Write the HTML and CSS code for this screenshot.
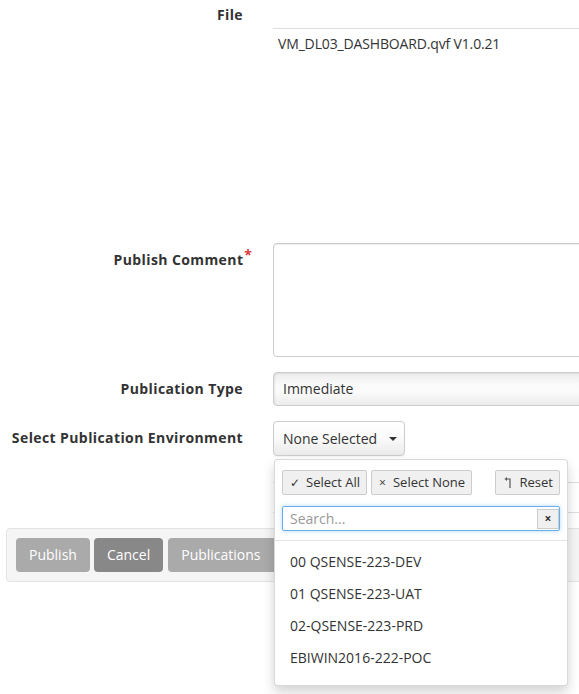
FILE: index.html
```html
<!DOCTYPE html>
<html>
<head>
<meta charset="utf-8">
<link rel="stylesheet" href="styles.css">
</head>
<body>
<div class="page">
  <div class="row row-file">
    <div class="label">File</div>
    <div class="field">
      <div class="file-head"></div>
      <div class="file-value">VM_DL03_DASHBOARD.qvf V1.0.21</div>
    </div>
  </div>

  <div class="row row-comment">
    <div class="label">Publish Comment<span class="req">*</span></div>
    <div class="field">
      <div class="textarea"></div>
    </div>
  </div>

  <div class="row row-type">
    <div class="label">Publication Type</div>
    <div class="field">
      <div class="select">Immediate</div>
    </div>
  </div>

  <div class="row row-env">
    <div class="label">Select Publication Environment</div>
    <div class="field">
      <div class="ms-wrap">
        <div class="ms-btn">None Selected <span class="caret"></span></div>
        <div class="ms-menu">
          <div class="ms-actions">
            <div class="ms-small"><span class="ico">&#10003;</span>Select All</div>
            <div class="ms-small"><span class="ico x">&#215;</span>Select None</div>
            <div class="ms-small reset"><svg class="reset-ico" width="8" height="11" viewBox="0 0 8 11"><path d="M6 11V2H2.5" fill="none" stroke="#555" stroke-width="1.2"/><path d="M0.5 2L3 0V4Z" fill="#555"/></svg>Reset</div>
          </div>
          <div class="ms-search">
            <div class="search-input">Search...</div>
            <div class="search-clear">&#215;</div>
          </div>
          <div class="ms-divider"></div>
          <ul class="ms-list">
            <li>00 QSENSE-223-DEV</li>
            <li>01 QSENSE-223-UAT</li>
            <li>02-QSENSE-223-PRD</li>
            <li>EBIWIN2016-222-POC</li>
          </ul>
        </div>
      </div>
      <div class="behind">
        <div class="behind-row"></div>
        <div class="behind-row"></div>
      </div>
    </div>
  </div>

  <div class="footer">
    <div class="btn btn-light">Publish</div>
    <div class="btn btn-dark">Cancel</div>
    <div class="btn btn-light">Publications</div>
  </div>
</div>
</body>
</html>
```

FILE: styles.css
```css
html, body {
  margin: 0;
  padding: 0;
  background: #fff;
  overflow: hidden;
}
body {
  font-family: "Open Sans", "DejaVu Sans", sans-serif;
  font-size: 14px;
  color: #333;
  width: 579px;
  height: 694px;
}
.page {
  width: 760px;
}
.row {
  display: grid;
  grid-template-columns: 243px 420px;
  column-gap: 30px;
}
.label {
  text-align: right;
  font-weight: 700;
  line-height: 20px;
  padding-top: 7px;
  white-space: nowrap;
  letter-spacing: 0.4px;
}
.req {
  color: #e03a3a;
  position: relative;
  top: -5px;
  font-size: 14px;
  margin-left: 1px;
  margin-right: -9px;
  letter-spacing: 0;
}
.row-file .label {
  padding-top: 5px;
}
.row-file {
  height: 243px;
}
.file-head {
  height: 28px;
  border-bottom: 1px solid #ddd;
}
.file-value {
  padding: 5px 0 0 5px;
  line-height: 20px;
  letter-spacing: -0.15px;
}
.textarea {
  height: 112px;
  border: 1px solid #ccc;
  border-radius: 4px;
  box-shadow: inset 0 1px 1px rgba(0,0,0,.075);
  background: #fff;
}
.row-comment {
  margin-bottom: 15px;
}
.select {
  height: 32px;
  line-height: 32px;
  border: 1px solid #ccc;
  border-radius: 4px;
  padding-left: 9px;
  background: linear-gradient(#ededed, #fbfbfb 40%, #fbfbfb 60%, #ececec);
  box-shadow: inset 1px 1px 2px rgba(0,0,0,.08);
}
.row-type {
  margin-bottom: 15px;
}
.field {
  position: relative;
}
.ms-wrap {
  position: relative;
  width: 132px;
  z-index: 2;
}
.ms-btn {
  box-sizing: border-box;
  height: 35px;
  line-height: 33px;
  width: 132px;
  border: 1px solid #ccc;
  border-radius: 4px;
  padding-left: 9px;
  background: linear-gradient(#fff, #fafafa 50%, #eaeaea);
  box-shadow: 0 1px 1px rgba(0,0,0,.05);
  white-space: nowrap;
}
.caret {
  display: inline-block;
  width: 0;
  height: 0;
  border-left: 4px solid transparent;
  border-right: 4px solid transparent;
  border-top: 4px solid #333;
  vertical-align: middle;
  margin-left: 8px;
  position: relative;
  top: -1px;
}
.ms-menu {
  position: absolute;
  top: 38px;
  left: 1px;
  box-sizing: border-box;
  width: 294px;
  height: 227px;
  background: #fff;
  border: 1px solid rgba(0,0,0,.15);
  border-radius: 4px;
  box-shadow: 0 6px 12px rgba(0,0,0,.175);
  padding: 10px 7px 0 7px;
}
.ms-actions {
  display: flex;
  gap: 4px;
  height: 25px;
}
.ms-small {
  box-sizing: border-box;
  height: 25px;
  line-height: 23px;
  font-size: 13px;
  border: 1px solid #ccc;
  border-radius: 2px;
  background: #f0f0f0;
  padding: 0 6px 0 7px;
  white-space: nowrap;
  color: #333;
}
.ms-small .ico {
  margin-right: 6px;
  font-size: 12px;
  font-weight: 700;
}
.ms-small .ico.x {
  font-size: 12px;
  font-weight: 400;
  margin-right: 7px;
}
.ms-small.reset {
  margin-left: auto;
  padding: 0 6px 0 8px;
}
.reset-ico {
  margin-right: 8px;
  vertical-align: -1px;
}
.ms-search {
  position: relative;
  margin-top: 11px;
  height: 25px;
}
.search-input {
  box-sizing: border-box;
  height: 25px;
  line-height: 23px;
  border: 1px solid #66afe9;
  border-radius: 2px;
  box-shadow: 0 0 4px rgba(102,175,233,.5);
  padding-left: 7px;
  color: #999;
  font-size: 14px;
}
.search-clear {
  position: absolute;
  top: 3px;
  right: 1px;
  width: 22px;
  height: 20px;
  box-sizing: border-box;
  border: 1px solid #ccc;
  background: #f0f0f0;
  text-align: center;
  line-height: 18px;
  font-size: 12px;
  font-weight: 700;
  color: #333;
}
.ms-divider {
  height: 1px;
  background: #e5e5e5;
  margin: 9px -7px 0;
}
.ms-list {
  list-style: none;
  margin: 5px 0 0 0;
  padding: 0;
}
.ms-list li {
  height: 32px;
  line-height: 32px;
  padding-left: 8px;
  color: #333;
}
.behind {
  position: absolute;
  top: 61px;
  left: 0;
  right: 0;
  z-index: 1;
}
.behind-row {
  height: 29px;
  border-top: 1px solid #ddd;
}
.footer {
  position: relative;
  z-index: 1;
  margin: 72px 0 0 6px;
  box-sizing: border-box;
  width: 600px;
  height: 54px;
  padding: 9px;
  background: #f5f5f5;
  border: 1px solid #e3e3e3;
  border-radius: 4px;
  display: flex;
  gap: 4px;
}
.btn {
  height: 34px;
  line-height: 34px;
  padding: 0 13px;
  border-radius: 4px;
  color: #fff;
  font-size: 14px;
}
.btn-light {
  background: #aaa;
}
.btn-dark {
  background: #888;
}
.btn-dark + .btn-light {
  margin-left: 1px;
  width: 140px;
}
```
